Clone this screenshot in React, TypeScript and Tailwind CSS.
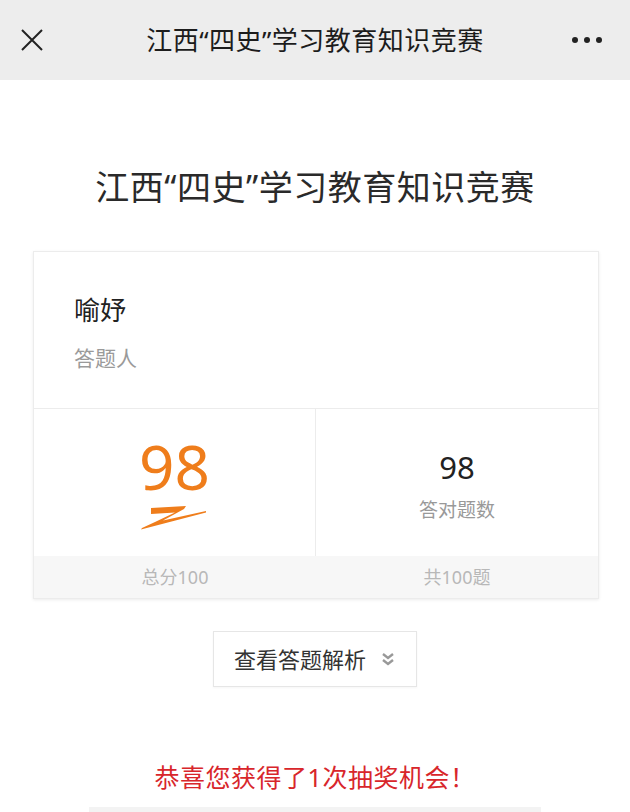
import React from "react";

const font = { fontFamily: '"Noto Sans", "Noto Sans CJK SC", sans-serif' };

function CloseIcon() {
    return (
        <svg width="24" height="24" viewBox="0 0 24 24" fill="none" stroke="#222" strokeWidth="2">
            <path d="M2 2 L22 22 M22 2 L2 22" />
        </svg>
    );
}

function Swoosh() {
    return (
        <svg width="70" height="30" viewBox="0 0 70 30">
            <path d="M13 5 L48 3 L46 6 L25 17.5 L68 8 L68 9.5 L3 26.5 L4 25 L17 19 L37 9.5 L13 11 Z" fill="#ef7d1b" />
        </svg>
    );
}

function DoubleChevron() {
    return (
        <svg width="16" height="16" viewBox="0 0 16 16" fill="none" stroke="#999" strokeWidth="2.4">
            <path d="M3 3 L8 7 L13 3 M3 9 L8 13 L13 9" />
        </svg>
    );
}

export default function App() {
    return (
        <div className="w-[630px] h-[812px] overflow-hidden bg-white" style={font}>
            <header className="h-[80px] bg-[#ededed] grid grid-cols-[80px_1fr_80px] items-center px-[20px]">
                <CloseIcon />
                <h1 className="text-center text-[26px] text-[#1c1c1c] tracking-[0.5px]">江西“四史”学习教育知识竞赛</h1>
                <div className="flex justify-end gap-[6px] pr-[8px]">
                    <span className="w-[6px] h-[6px] rounded-full bg-[#222]" />
                    <span className="w-[6px] h-[6px] rounded-full bg-[#222]" />
                    <span className="w-[6px] h-[6px] rounded-full bg-[#222]" />
                </div>
            </header>

            <main className="flex flex-col items-center">
                <h2 className="mt-[82px] text-[34px] text-[#2a2a2a] tracking-[0.5px]">江西“四史”学习教育知识竞赛</h2>

                <div className="mt-[38px] w-[566px] ml-[2px] border border-[#ececec] shadow-[0_1px_3px_rgba(0,0,0,0.08)]">
                    <div className="h-[157px] px-[40px] pt-[38px] border-b border-[#ececec]">
                        <div className="text-[26px] text-[#222] leading-[40px]">喻妤</div>
                        <div className="mt-[14px] text-[21px] text-[#9a9a9a] leading-[28px]">答题人</div>
                    </div>
                    <div className="grid grid-cols-2">
                        <div className="flex flex-col items-center border-r border-[#ececec] h-[147px] pt-[22px]">
                            <div className="text-[62px] leading-[70px] text-[#ef7d1b]">98</div>
                            <div className="mt-[2px] -ml-[4px]">
                                <Swoosh />
                            </div>
                        </div>
                        <div className="flex flex-col items-center h-[147px] pt-[38px]">
                            <div className="text-[31px] leading-[40px] text-[#222]">98</div>
                            <div className="mt-[10px] text-[19px] leading-[26px] text-[#999]">答对题数</div>
                        </div>
                    </div>
                    <div className="grid grid-cols-2 bg-[#f7f7f7] h-[42px] items-center text-[18px] text-[#b8b8b8]">
                        <div className="text-center">总分100</div>
                        <div className="text-center">共100题</div>
                    </div>
                </div>

                <button className="mt-[32px] w-[204px] h-[56px] border border-[#e6e6e6] bg-white flex items-center justify-center gap-[14px] shadow-[0_1px_2px_rgba(0,0,0,0.04)]">
                    <span className="text-[22px] text-[#333]">查看答题解析</span>
                    <DoubleChevron />
                </button>

                <p className="mt-[72px] text-[25px] text-[#d8262b] tracking-[0.5px]">恭喜您获得了1次抽奖机会！</p>

                <div className="mt-[10px] w-[452px] h-[20px] bg-[#f3f3f3]" />
            </main>
        </div>
    );
}
